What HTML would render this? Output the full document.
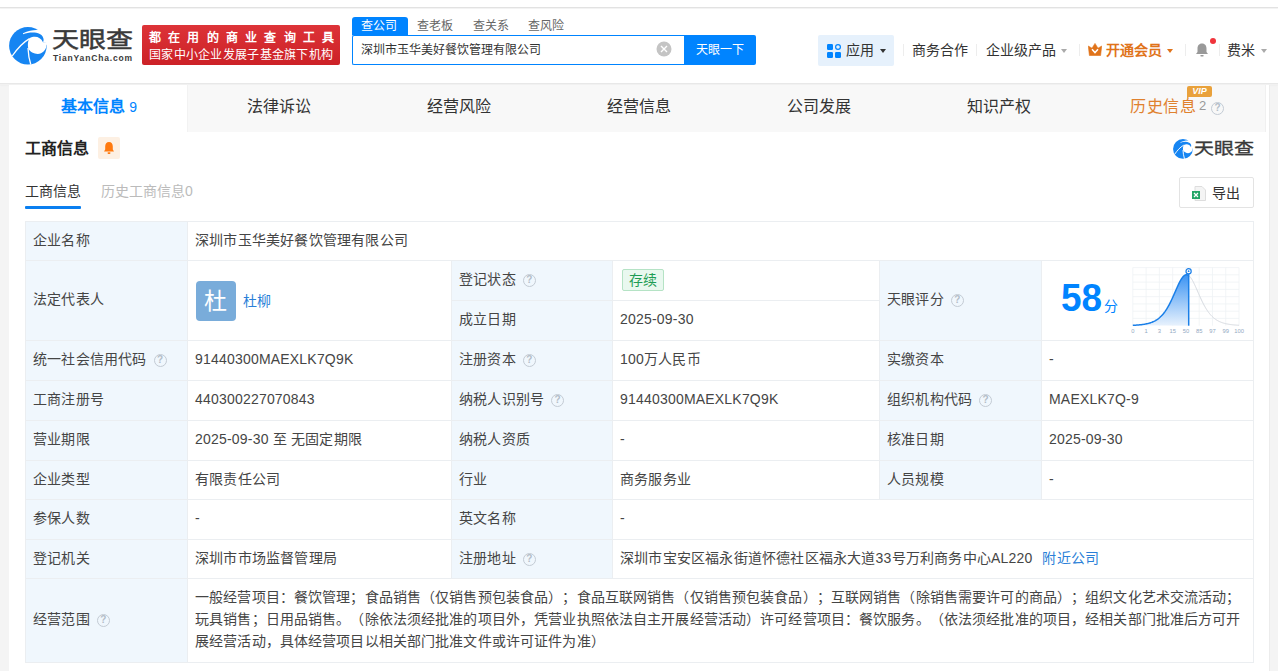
<!DOCTYPE html>
<html lang="zh-CN"><head><meta charset="utf-8">
<style>
*{box-sizing:border-box;margin:0;padding:0}
html,body{width:1278px;height:671px;overflow:hidden}
body{text-spacing-trim:space-all;background:#f4f4f4;font-family:"Liberation Sans",sans-serif;color:#333;font-size:14px;position:relative}
.abs{position:absolute}
#topbar{left:0;top:0;width:1278px;height:8px;background:#fff;border-bottom:1px solid #e2e2e2}
#header{left:0;top:9px;width:1278px;height:75px;background:#fff;box-shadow:0 1px 2px rgba(0,0,0,.06)}
.nowrap{white-space:nowrap}
#banner{left:142px;top:25px;width:198px;height:40px;background:linear-gradient(#dd3338,#cc2127);border-radius:2px;color:#fff;font-size:13px;line-height:14px}
.stab{top:17px;height:18px;font-size:12px;line-height:18px;color:#666}
#search{left:352px;top:35px;width:332px;height:30px;border:1px solid #0084ff;border-right:none;border-radius:2px 0 0 2px;background:#fff}
#sbtn{left:684px;top:35px;width:72px;height:30px;background:#0084ff;border-radius:0 2px 2px 0;color:#fff;font-size:12px;line-height:30px;text-align:center}
.nav{top:41px;font-size:14px;line-height:18px;color:#333}
.divv{top:44px;width:1px;height:12px;background:#ededed}
.caret{width:0;height:0;border-left:3px solid transparent;border-right:3px solid transparent;border-top:4px solid #aaa}
#card{left:9px;top:84px;width:1261px;height:600px;background:#fff;border-right:1px solid #ececec}
#tabs{left:9px;top:84px;width:1257px;height:48px;background:#f8f8f8;border-right:1px solid #f0f0f0}
.tab{top:84px;height:48px;line-height:45px;font-size:16px;color:#333;text-align:center}
table.grid{position:absolute;left:25px;top:221px;width:1228px;border-collapse:collapse;table-layout:fixed}
.grid td{border:1px solid #ebeef1;padding:0 7px 3px;letter-spacing:0.2px;font-size:14px;line-height:22px;color:#454545;vertical-align:middle}
.grid td.h{background:#f0f7fd}
.q{display:inline-block;width:13px;height:13px;border:1.4px solid #c3cbd4;border-radius:50%;font-size:10px;line-height:10.5px;text-align:center;color:#b3bdc8;vertical-align:1px;margin-left:6px;font-family:"Liberation Sans",sans-serif;font-weight:bold;position:relative;left:1px}
</style></head><body>
<div id="topbar" class="abs"></div>
<div id="header" class="abs"></div>

<!-- logo -->
<svg class="abs" style="left:9px;top:27px" width="38" height="38" viewBox="9 27 38 38">
  <circle cx="27.9" cy="45.8" r="18.8" fill="#1685f2"/>
  <path d="M23 33.2 C28.5 30.6 34 29.8 37.7 30.1 L48 26 L48 42 L43 42.2 C44.5 39.5 43.2 35.6 39.8 33.9 C35 31.6 28.5 32.2 23 34.2 Z" fill="#fff"/>
  <path d="M43 42.2 C40.5 37 35 35.3 29.4 38.3 C27.8 41.5 27.5 45.5 28.3 48.5 C30.5 52.8 36.5 55 41 53.3 C44.5 51.8 46.5 48.5 46.6 44.8 L48 44.5 L48 42 Z" fill="#fff"/>
  <path d="M12.2 56 C17 49 22 43 29.5 38.6" stroke="#fff" stroke-width="1.3" fill="none"/>
  <path d="M28 48 C28.2 53 29 59 30.8 64.5" stroke="#fff" stroke-width="1.3" fill="none"/>
</svg>
<div class="abs nowrap" style="left:52px;top:26px;font-size:26px;line-height:32px;color:#3a3a3a;font-weight:500;letter-spacing:0px;-webkit-text-stroke:0.6px #3a3a3a;transform:scale(1.04,0.84);transform-origin:0 0">天眼查</div>
<div class="abs nowrap" style="left:53px;top:54px;font-size:8.5px;line-height:9px;color:#3a3a3a;font-weight:bold;letter-spacing:0.82px">TianYanCha.com</div>

<div id="banner" class="abs">
  <div class="abs nowrap" style="left:7px;top:6px;font-size:12px;line-height:14px;font-weight:bold;letter-spacing:7.22px">都在用的商业查询工具</div>
  <div class="abs nowrap" style="left:7px;top:23px;font-size:12px;line-height:14px;letter-spacing:0.29px">国家中小企业发展子基金旗下机构</div>
</div>

<!-- search tabs -->
<div class="abs" style="left:352px;top:17px;width:56px;height:18px;background:#0084ff;border-radius:3px 3px 0 0"></div>
<div class="abs stab nowrap" style="left:361px;color:#fff">查公司</div>
<div class="abs stab nowrap" style="left:417px">查老板</div>
<div class="abs stab nowrap" style="left:473px">查关系</div>
<div class="abs stab nowrap" style="left:528px">查风险</div>
<div id="search" class="abs"></div>
<div class="abs nowrap" style="left:361px;top:41px;font-size:12px;line-height:18px;color:#333">深圳市玉华美好餐饮管理有限公司</div>
<svg class="abs" style="left:656px;top:41px" width="16" height="16" viewBox="0 0 16 16"><circle cx="8" cy="8" r="7.5" fill="#c4c4c4"/><path d="M5 5L11 11M11 5L5 11" stroke="#fff" stroke-width="1.4"/></svg>
<div id="sbtn" class="abs nowrap">天眼一下</div>

<!-- nav -->
<div class="abs" style="left:818px;top:35px;width:76px;height:31px;background:#e6f1fc;border-radius:2px"></div>
<svg class="abs" style="left:827px;top:44px" width="14" height="14" viewBox="0 0 14 14"><rect x="0" y="0" width="6" height="6" rx="1.2" fill="#0084ff"/><circle cx="11" cy="3" r="2.4" fill="none" stroke="#0084ff" stroke-width="1.2"/><rect x="0" y="8" width="6" height="6" rx="1.2" fill="#0084ff"/><rect x="8" y="8" width="6" height="6" rx="1.2" fill="#0084ff"/></svg>
<div class="abs nav nowrap" style="left:846px">应用</div>
<div class="abs caret" style="left:880px;top:49px;border-top-color:#333"></div>
<div class="abs divv" style="left:903px"></div>
<div class="abs nav nowrap" style="left:912px">商务合作</div>
<div class="abs divv" style="left:976px"></div>
<div class="abs nav nowrap" style="left:986px">企业级产品</div>
<div class="abs caret" style="left:1061px;top:49px"></div>
<div class="abs divv" style="left:1079px"></div>
<svg class="abs" style="left:1088px;top:43px" width="14" height="13" viewBox="0 0 14 13"><path d="M0.3 3 L4 5.2 L7 0.4 L10 5.2 L13.7 3 L12.6 12.5 L1.4 12.5 Z" fill="#e0731a" stroke="#e0731a" stroke-width="0.6" stroke-linejoin="round"/><path d="M4 6.3 L7 9.6 L10 6.3" stroke="#fff" stroke-width="1.5" fill="none"/></svg>
<div class="abs nav nowrap" style="left:1106px;color:#e0731a;font-weight:bold">开通会员</div>
<div class="abs caret" style="left:1167px;top:49px;border-top-color:#e0731a"></div>
<div class="abs divv" style="left:1185px"></div>
<svg class="abs" style="left:1194px;top:42px" width="16" height="16" viewBox="0 0 16 16"><path d="M8 1.5 C4.8 1.5 3.5 4 3.5 6.5 L3.5 10 L2 12 L14 12 L12.5 10 L12.5 6.5 C12.5 4 11.2 1.5 8 1.5 Z" fill="#999"/><rect x="6.3" y="13" width="3.4" height="1.6" rx=".8" fill="#999"/></svg>
<div class="abs" style="left:1210px;top:38px;width:6px;height:6px;border-radius:50%;background:#f0343c"></div>
<div class="abs divv" style="left:1219px"></div>
<div class="abs nav nowrap" style="left:1227px">费米</div>
<div class="abs caret" style="left:1261px;top:49px"></div>

<!-- card -->
<div id="card" class="abs"></div>
<div id="tabs" class="abs"></div>
<div class="abs" style="left:9px;top:84px;width:178px;height:48px;background:#fff"></div>
<div class="abs" style="left:0;top:83px;width:1278px;height:1px;background:#e8e8e8"></div>
<div class="abs" style="left:0;top:84px;width:1278px;height:1px;background:#f1f1f1"></div>
<div class="abs" style="left:187px;top:84px;width:1px;height:48px;background:#f2f2f2"></div>
<div class="abs tab nowrap" style="left:9px;width:180px;color:#0084ff;font-weight:bold">基本信息 <span style="font-size:14px;font-weight:normal">9</span></div>
<div class="abs tab nowrap" style="left:189px;width:180px">法律诉讼</div>
<div class="abs tab nowrap" style="left:369px;width:180px">经营风险</div>
<div class="abs tab nowrap" style="left:549px;width:180px">经营信息</div>
<div class="abs tab nowrap" style="left:729px;width:180px">公司发展</div>
<div class="abs tab nowrap" style="left:909px;width:180px">知识产权</div>
<div class="abs tab nowrap" style="left:1130px;text-align:left;color:#e0812e;letter-spacing:0.6px">历史信息</div>
<div class="abs nowrap" style="left:1199px;top:97px;font-size:13px;line-height:18px;color:#999">2</div>
<div class="abs q" style="left:1205px;top:99px;width:13px;height:13px;line-height:10.5px">?</div>
<div class="abs" style="left:1187px;top:95px;width:0;height:0;border-left:4px solid #e9a13b;border-bottom:4px solid transparent"></div>
<div class="abs" style="left:1187px;top:86px;width:25px;height:11px;background:#e9a13b;border-radius:2px;color:#fff;font-size:9px;line-height:11px;font-weight:bold;font-style:italic;text-align:center">VIP</div>

<!-- section title -->
<div class="abs nowrap" style="left:25px;top:138px;font-size:16px;line-height:22px;font-weight:bold;color:#222">工商信息</div>
<div class="abs" style="left:98px;top:137px;width:22px;height:22px;background:#fdf0e3;border-radius:2px"></div>
<svg class="abs" style="left:103px;top:141px" width="12" height="14" viewBox="0 0 12 14"><path d="M6 1 C3.5 1 2.2 3 2.2 5.5 L2.2 8.5 L1 10.5 L11 10.5 L9.8 8.5 L9.8 5.5 C9.8 3 8.5 1 6 1 Z" fill="#ff7a0f"/><rect x="4.5" y="11.3" width="3" height="1.6" rx=".8" fill="#ff7a0f"/></svg>

<!-- small logo right -->
<svg class="abs" style="left:1173px;top:139px" width="20" height="20" viewBox="9 27 38 38">
  <circle cx="27.9" cy="45.8" r="18.8" fill="#1685f2"/>
  <path d="M23 33.2 C28.5 30.6 34 29.8 37.7 30.1 L48 26 L48 42 L43 42.2 C44.5 39.5 43.2 35.6 39.8 33.9 C35 31.6 28.5 32.2 23 34.2 Z" fill="#fff"/>
  <path d="M43 42.2 C40.5 37 35 35.3 29.4 38.3 C27.8 41.5 27.5 45.5 28.3 48.5 C30.5 52.8 36.5 55 41 53.3 C44.5 51.8 46.5 48.5 46.6 44.8 L48 44.5 L48 42 Z" fill="#fff"/>
  <path d="M12.2 56 C17 49 22 43 29.5 38.6" stroke="#fff" stroke-width="1.8" fill="none"/>
  <path d="M28 48 C28.2 53 29 59 30.8 64.5" stroke="#fff" stroke-width="1.8" fill="none"/>
</svg>
<div class="abs nowrap" style="left:1194px;top:138px;font-size:20px;line-height:24px;font-weight:500;color:#3a3a3a;-webkit-text-stroke:0.4px #3a3a3a;transform:scale(1.0,0.82);transform-origin:0 0">天眼查</div>

<!-- subtabs -->
<div class="abs nowrap" style="left:25px;top:181px;font-size:14px;line-height:20px;color:#333">工商信息</div>
<div class="abs" style="left:25px;top:206px;width:56px;height:3px;background:#0a7ff0;border-radius:1px"></div>
<div class="abs nowrap" style="left:101px;top:181px;font-size:14px;line-height:20px;color:#bbb">历史工商信息0</div>

<div class="abs" style="left:1179px;top:177px;width:75px;height:31px;border:1px solid #e3e3e3;border-radius:2px;background:#fff"></div>
<svg class="abs" style="left:1192px;top:186px" width="14" height="15" viewBox="0 0 14 15"><path d="M3 0.5 L10 0.5 L13.5 4 L13.5 14.5 L3 14.5 Z" fill="#f4f4f4" stroke="#ddd" stroke-width="1"/><rect x="0" y="5" width="8" height="8" fill="#23a566"/><path d="M2 7 L6 11 M6 7 L2 11" stroke="#fff" stroke-width="1.2"/></svg>
<div class="abs nowrap" style="left:1212px;top:183px;font-size:14px;line-height:20px;color:#333">导出</div>

<table class="grid">
<colgroup><col style="width:162px"><col style="width:264px"><col style="width:161px"><col style="width:267px"><col style="width:162px"><col style="width:212px"></colgroup>
<tr style="height:39px"><td class="h">企业名称</td><td colspan="5">深圳市玉华美好餐饮管理有限公司</td></tr>
<tr style="height:40px"><td class="h" rowspan="2">法定代表人</td><td rowspan="2"><div style="display:flex;align-items:center;position:relative;left:1px;top:2px"><div style="width:40px;height:40px;border-radius:4px;background:#79acda;color:#fff;font-size:23px;line-height:40px;text-align:center">杜</div><span style="color:#2a7fd8;margin-left:7px">杜柳</span></div></td><td class="h">登记状态<span class="q">?</span></td><td><span style="display:inline-block;height:22px;line-height:20px;padding:0 6px;border:1px solid #b5e3c5;background:#e9f8ef;color:#1f9d55;border-radius:2px;position:relative;left:2px;top:1px">存续</span></td><td class="h" rowspan="2">天眼评分<span class="q">?</span></td><td rowspan="2" style="position:relative;padding:0"></td></tr>
<tr style="height:40px"><td class="h">成立日期</td><td>2025-09-30</td></tr>
<tr style="height:40px"><td class="h">统一社会信用代码<span class="q">?</span></td><td>91440300MAEXLK7Q9K</td><td class="h">注册资本<span class="q">?</span></td><td>100万人民币</td><td class="h">实缴资本</td><td>-</td></tr>
<tr style="height:40px"><td class="h">工商注册号</td><td>440300227070843</td><td class="h">纳税人识别号<span class="q">?</span></td><td>91440300MAEXLK7Q9K</td><td class="h">组织机构代码<span class="q">?</span></td><td>MAEXLK7Q-9</td></tr>
<tr style="height:40px"><td class="h">营业期限</td><td>2025-09-30 至 无固定期限</td><td class="h">纳税人资质</td><td>-</td><td class="h">核准日期</td><td>2025-09-30</td></tr>
<tr style="height:39px"><td class="h">企业类型</td><td>有限责任公司</td><td class="h">行业</td><td>商务服务业</td><td class="h">人员规模</td><td>-</td></tr>
<tr style="height:40px"><td class="h">参保人数</td><td>-</td><td class="h">英文名称</td><td colspan="3">-</td></tr>
<tr style="height:39px"><td class="h">登记机关</td><td>深圳市市场监督管理局</td><td class="h">注册地址<span class="q">?</span></td><td colspan="3">深圳市宝安区福永街道怀德社区福永大道33号万利商务中心AL220<span style="color:#2a7fd8;margin-left:10px">附近公司</span></td></tr>
<tr style="height:84px"><td class="h">经营范围<span class="q">?</span></td><td colspan="5" style="letter-spacing:0.13px">一般经营项目：餐饮管理；食品销售（仅销售预包装食品）；食品互联网销售（仅销售预包装食品）；互联网销售（除销售需要许可的商品）；组织文化艺术交流活动；<br>玩具销售；日用品销售。（除依法须经批准的项目外，凭营业执照依法自主开展经营活动）许可经营项目：餐饮服务。（依法须经批准的项目，经相关部门批准后方可开<br>展经营活动，具体经营项目以相关部门批准文件或许可证件为准）</td></tr>
</table>

<!-- score -->
<div class="abs nowrap" style="left:1061px;top:278px;font-size:38px;line-height:40px;font-weight:bold;color:#0084ff;transform:scaleX(0.97);transform-origin:0 0">58</div>
<div class="abs nowrap" style="left:1104px;top:297px;font-size:14px;line-height:18px;color:#0084ff">分</div>
<svg class="abs" style="left:1130px;top:264px" width="116" height="72" viewBox="0 0 116 72">
  <defs><linearGradient id="gf" x1="0" y1="0" x2="0" y2="1"><stop offset="0" stop-color="#3b93f3"/><stop offset="1" stop-color="#e8f2fd"/></linearGradient></defs>
  <path d="M2.8 3.60H109 M2.8 10.86H109 M2.8 18.12H109 M2.8 25.38H109 M2.8 32.64H109 M2.8 39.90H109 M2.8 47.16H109 M2.8 54.42H109 M2.80 3.6V61.7 M16.08 3.6V61.7 M29.36 3.6V61.7 M42.64 3.6V61.7 M55.92 3.6V61.7 M69.20 3.6V61.7 M82.48 3.6V61.7 M95.76 3.6V61.7 M109.04 3.6V61.7" stroke="#eff2f5" stroke-width="0.8" fill="none"/>
  <path d="M2.80 61.32 L3.00 61.31 L3.50 61.29 L4.00 61.26 L4.50 61.24 L5.00 61.21 L5.50 61.18 L6.00 61.15 L6.50 61.11 L7.00 61.08 L7.50 61.04 L8.00 61.00 L8.50 60.96 L9.00 60.92 L9.50 60.87 L10.00 60.82 L10.50 60.77 L11.00 60.71 L11.50 60.65 L12.00 60.59 L12.50 60.53 L13.00 60.46 L13.50 60.38 L14.00 60.30 L14.50 60.22 L15.00 60.13 L15.50 60.04 L16.00 59.94 L16.50 59.84 L17.00 59.73 L17.50 59.61 L18.00 59.49 L18.50 59.36 L19.00 59.22 L19.50 59.08 L20.00 58.92 L20.50 58.76 L21.00 58.59 L21.50 58.41 L22.00 58.22 L22.50 58.01 L23.00 57.80 L23.50 57.58 L24.00 57.34 L24.50 57.09 L25.00 56.82 L25.50 56.55 L26.00 56.25 L26.50 55.94 L27.00 55.62 L27.50 55.28 L28.00 54.92 L28.50 54.54 L29.00 54.14 L29.50 53.72 L30.00 53.28 L30.50 52.82 L31.00 52.34 L31.50 51.83 L32.00 51.30 L32.50 50.74 L33.00 50.16 L33.50 49.56 L34.00 48.92 L34.50 48.26 L35.00 47.58 L35.50 46.86 L36.00 46.11 L36.50 45.34 L37.00 44.54 L37.50 43.70 L38.00 42.84 L38.50 41.95 L39.00 41.04 L39.50 40.09 L40.00 39.12 L40.50 38.12 L41.00 37.10 L41.50 36.05 L42.00 34.98 L42.50 33.89 L43.00 32.79 L43.50 31.67 L44.00 30.54 L44.50 29.40 L45.00 28.25 L45.50 27.10 L46.00 25.96 L46.50 24.82 L47.00 23.69 L47.50 22.58 L48.00 21.48 L48.50 20.41 L49.00 19.38 L49.50 18.37 L50.00 17.41 L50.50 16.50 L51.00 15.63 L51.50 14.82 L52.00 14.07 L52.50 13.39 L53.00 12.78 L53.50 12.24 L54.00 11.77 L54.50 11.39 L55.00 11.09 L55.50 10.87 L56.00 10.74 L56.50 10.70 L57.00 10.74 L57.50 10.87 L58.00 11.09 L58.50 11.39 L58.70 11.53 L58.7 61.7 Z" fill="url(#gf)"/>
  <path d="M58.70 11.53 L59.00 11.77 L59.50 12.24 L60.00 12.78 L60.50 13.39 L61.00 14.07 L61.50 14.82 L62.00 15.63 L62.50 16.50 L63.00 17.41 L63.50 18.37 L64.00 19.38 L64.50 20.41 L65.00 21.48 L65.50 22.58 L66.00 23.69 L66.50 24.82 L67.00 25.96 L67.50 27.10 L68.00 28.25 L68.50 29.40 L69.00 30.54 L69.50 31.67 L70.00 32.79 L70.50 33.89 L71.00 34.98 L71.50 36.05 L72.00 37.10 L72.50 38.12 L73.00 39.12 L73.50 40.09 L74.00 41.04 L74.50 41.95 L75.00 42.84 L75.50 43.70 L76.00 44.54 L76.50 45.34 L77.00 46.11 L77.50 46.86 L78.00 47.58 L78.50 48.26 L79.00 48.92 L79.50 49.56 L80.00 50.16 L80.50 50.74 L81.00 51.30 L81.50 51.83 L82.00 52.34 L82.50 52.82 L83.00 53.28 L83.50 53.72 L84.00 54.14 L84.50 54.54 L85.00 54.92 L85.50 55.28 L86.00 55.62 L86.50 55.94 L87.00 56.25 L87.50 56.55 L88.00 56.82 L88.50 57.09 L89.00 57.34 L89.50 57.58 L90.00 57.80 L90.50 58.01 L91.00 58.22 L91.50 58.41 L92.00 58.59 L92.50 58.76 L93.00 58.92 L93.50 59.08 L94.00 59.22 L94.50 59.36 L95.00 59.49 L95.50 59.61 L96.00 59.73 L96.50 59.84 L97.00 59.94 L97.50 60.04 L98.00 60.13 L98.50 60.22 L99.00 60.30 L99.50 60.38 L100.00 60.46 L100.50 60.53 L101.00 60.59 L101.50 60.65 L102.00 60.71 L102.50 60.77 L103.00 60.82 L103.50 60.87 L104.00 60.92 L104.50 60.96 L105.00 61.00 L105.50 61.04 L106.00 61.08 L106.50 61.11 L107.00 61.15 L107.50 61.18 L108.00 61.21 L108.50 61.24 L109.00 61.26 L109.00 61.26" stroke="#d6dae0" stroke-width="1" fill="none"/>
  <path d="M2.80 61.32 L3.00 61.31 L3.50 61.29 L4.00 61.26 L4.50 61.24 L5.00 61.21 L5.50 61.18 L6.00 61.15 L6.50 61.11 L7.00 61.08 L7.50 61.04 L8.00 61.00 L8.50 60.96 L9.00 60.92 L9.50 60.87 L10.00 60.82 L10.50 60.77 L11.00 60.71 L11.50 60.65 L12.00 60.59 L12.50 60.53 L13.00 60.46 L13.50 60.38 L14.00 60.30 L14.50 60.22 L15.00 60.13 L15.50 60.04 L16.00 59.94 L16.50 59.84 L17.00 59.73 L17.50 59.61 L18.00 59.49 L18.50 59.36 L19.00 59.22 L19.50 59.08 L20.00 58.92 L20.50 58.76 L21.00 58.59 L21.50 58.41 L22.00 58.22 L22.50 58.01 L23.00 57.80 L23.50 57.58 L24.00 57.34 L24.50 57.09 L25.00 56.82 L25.50 56.55 L26.00 56.25 L26.50 55.94 L27.00 55.62 L27.50 55.28 L28.00 54.92 L28.50 54.54 L29.00 54.14 L29.50 53.72 L30.00 53.28 L30.50 52.82 L31.00 52.34 L31.50 51.83 L32.00 51.30 L32.50 50.74 L33.00 50.16 L33.50 49.56 L34.00 48.92 L34.50 48.26 L35.00 47.58 L35.50 46.86 L36.00 46.11 L36.50 45.34 L37.00 44.54 L37.50 43.70 L38.00 42.84 L38.50 41.95 L39.00 41.04 L39.50 40.09 L40.00 39.12 L40.50 38.12 L41.00 37.10 L41.50 36.05 L42.00 34.98 L42.50 33.89 L43.00 32.79 L43.50 31.67 L44.00 30.54 L44.50 29.40 L45.00 28.25 L45.50 27.10 L46.00 25.96 L46.50 24.82 L47.00 23.69 L47.50 22.58 L48.00 21.48 L48.50 20.41 L49.00 19.38 L49.50 18.37 L50.00 17.41 L50.50 16.50 L51.00 15.63 L51.50 14.82 L52.00 14.07 L52.50 13.39 L53.00 12.78 L53.50 12.24 L54.00 11.77 L54.50 11.39 L55.00 11.09 L55.50 10.87 L56.00 10.74 L56.50 10.70 L57.00 10.74 L57.50 10.87 L58.00 11.09 L58.50 11.39 L58.70 11.53" stroke="#1a7fe8" stroke-width="1.5" fill="none"/>
  <path d="M58.7 9.5 V61.7" stroke="#1a7fe8" stroke-width="1.5"/>
  <circle cx="58.6" cy="7.2" r="2.6" fill="#fff" stroke="#1a7fe8" stroke-width="1.2"/>
  <circle cx="58.6" cy="7.2" r="0.9" fill="#1a7fe8"/>
  <g font-size="5.8" fill="#93a9c2" font-family="Liberation Sans" text-anchor="middle"><text x="2.80" y="68.6">0</text><text x="16.08" y="68.6">1</text><text x="29.36" y="68.6">3</text><text x="42.64" y="68.6">15</text><text x="55.92" y="68.6">50</text><text x="69.20" y="68.6">85</text><text x="82.48" y="68.6">97</text><text x="95.76" y="68.6">99</text><text x="109.04" y="68.6">100</text></g>
</svg>
</body></html>
